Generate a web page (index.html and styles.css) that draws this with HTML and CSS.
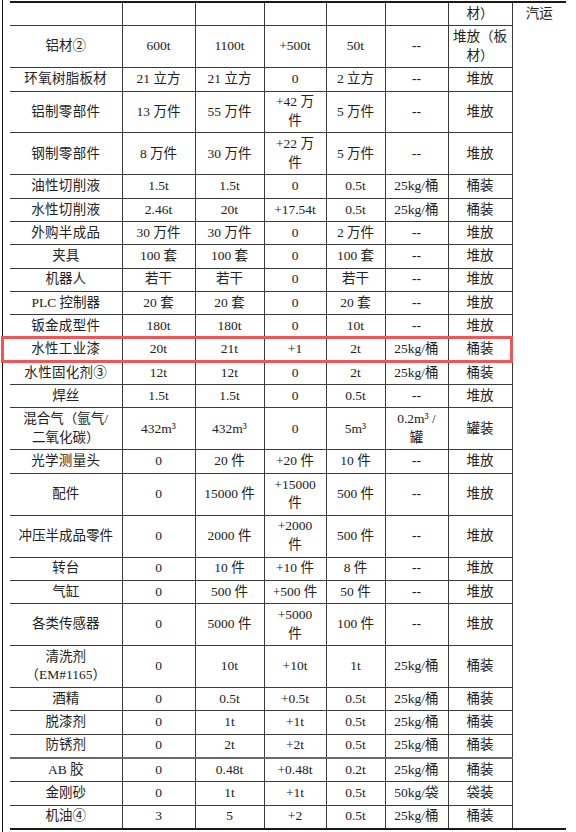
FILE: index.html
```html
<!DOCTYPE html>
<html lang="zh">
<head>
<meta charset="utf-8">
<title>原辅材料表</title>
<link rel="stylesheet" href="styles.css">
</head>
<body>
<div class="page">
<table class="mat">
<colgroup>
<col class="c1"><col class="c2"><col class="c3"><col class="c4"><col class="c5"><col class="c6"><col class="c7"><col class="c8">
</colgroup>
<tbody>
<tr class="first"><td></td><td></td><td></td><td></td><td></td><td></td><td>材）</td><td class="ship" rowspan="29">汽运</td></tr>
<tr><td>铝材②</td><td>600t</td><td>1100t</td><td>+500t</td><td>50t</td><td class="dash">--</td><td>堆放（板<br>材）</td></tr>
<tr><td class="sp">环氧树脂板材</td><td>21 立方</td><td>21 立方</td><td>0</td><td>2 立方</td><td class="dash">--</td><td>堆放</td></tr>
<tr><td class="sp">铝制零部件</td><td>13 万件</td><td>55 万件</td><td>+42 万<br>件</td><td>5 万件</td><td class="dash">--</td><td>堆放</td></tr>
<tr><td class="sp">钢制零部件</td><td>8 万件</td><td>30 万件</td><td>+22 万<br>件</td><td>5 万件</td><td class="dash">--</td><td>堆放</td></tr>
<tr><td class="sp">油性切削液</td><td>1.5t</td><td>1.5t</td><td>0</td><td>0.5t</td><td>25kg/桶</td><td>桶装</td></tr>
<tr><td class="sp">水性切削液</td><td>2.46t</td><td>20t</td><td>+17.54t</td><td>0.5t</td><td>25kg/桶</td><td>桶装</td></tr>
<tr><td class="sp">外购半成品</td><td>30 万件</td><td>30 万件</td><td>0</td><td>2 万件</td><td class="dash">--</td><td>堆放</td></tr>
<tr><td>夹具</td><td>100 套</td><td>100 套</td><td>0</td><td>100 套</td><td class="dash">--</td><td>堆放</td></tr>
<tr><td>机器人</td><td>若干</td><td>若干</td><td>0</td><td>若干</td><td class="dash">--</td><td>堆放</td></tr>
<tr><td>PLC 控制器</td><td>20 套</td><td>20 套</td><td>0</td><td>20 套</td><td class="dash">--</td><td>堆放</td></tr>
<tr><td class="sp">钣金成型件</td><td>180t</td><td>180t</td><td>0</td><td>10t</td><td class="dash">--</td><td>堆放</td></tr>
<tr><td class="sp">水性工业漆</td><td>20t</td><td>21t</td><td>+1</td><td>2t</td><td>25kg/桶</td><td>桶装</td></tr>
<tr><td class="sp">水性固化剂③</td><td>12t</td><td>12t</td><td>0</td><td>2t</td><td>25kg/桶</td><td>桶装</td></tr>
<tr><td>焊丝</td><td>1.5t</td><td>1.5t</td><td>0</td><td>0.5t</td><td class="dash">--</td><td>堆放</td></tr>
<tr><td>混合气（氩气/<br>二氧化碳）</td><td>432m³</td><td>432m³</td><td>0</td><td>5m³</td><td>0.2m³ /<br>罐</td><td>罐装</td></tr>
<tr><td class="sp">光学测量头</td><td>0</td><td>20 件</td><td>+20 件</td><td>10 件</td><td class="dash">--</td><td>堆放</td></tr>
<tr><td>配件</td><td>0</td><td>15000 件</td><td>+15000<br>件</td><td>500 件</td><td class="dash">--</td><td>堆放</td></tr>
<tr><td>冲压半成品零件</td><td>0</td><td>2000 件</td><td>+2000<br>件</td><td>500 件</td><td class="dash">--</td><td>堆放</td></tr>
<tr><td>转台</td><td>0</td><td>10 件</td><td>+10 件</td><td>8 件</td><td class="dash">--</td><td>堆放</td></tr>
<tr><td>气缸</td><td>0</td><td>500 件</td><td>+500 件</td><td>50 件</td><td class="dash">--</td><td>堆放</td></tr>
<tr><td>各类传感器</td><td>0</td><td>5000 件</td><td>+5000<br>件</td><td>100 件</td><td class="dash">--</td><td>堆放</td></tr>
<tr><td>清洗剂<br>（EM#1165）</td><td>0</td><td>10t</td><td>+10t</td><td>1t</td><td>25kg/桶</td><td>桶装</td></tr>
<tr><td>酒精</td><td>0</td><td>0.5t</td><td>+0.5t</td><td>0.5t</td><td>25kg/桶</td><td>桶装</td></tr>
<tr><td>脱漆剂</td><td>0</td><td>1t</td><td>+1t</td><td>0.5t</td><td>25kg/桶</td><td>桶装</td></tr>
<tr><td>防锈剂</td><td>0</td><td>2t</td><td>+2t</td><td>0.5t</td><td>25kg/桶</td><td>桶装</td></tr>
<tr class="ab"><td>AB 胶</td><td>0</td><td>0.48t</td><td>+0.48t</td><td>0.2t</td><td>25kg/桶</td><td>桶装</td></tr>
<tr><td>金刚砂</td><td>0</td><td>1t</td><td>+1t</td><td>0.5t</td><td>50kg/袋</td><td>袋装</td></tr>
<tr class="last"><td>机油④</td><td>3</td><td>5</td><td>+2</td><td>0.5t</td><td>25kg/桶</td><td>桶装</td></tr>
</tbody>
</table>
<div class="highlight"></div>
</div>
</body>
</html>
```

FILE: styles.css
```css
html, body {
  margin: 0;
  padding: 0;
  background: #fff;
  overflow: hidden;
}

.page {
  position: relative;
  margin-left: 2px;
  border-left: 1px solid #111;
  padding-left: 7px;
  padding-top: 1px;
  height: 832px;
  box-sizing: border-box;
}

.mat {
  border-collapse: collapse;
  table-layout: fixed;
  width: 556px;
  font-family: "Liberation Serif", "Noto Sans CJK SC", serif;
  font-size: 13.5px;
  line-height: 18.6px;
  color: #222;
}

.c1 { width: 112px; }
.c2 { width: 73px; }
.c3 { width: 69px; }
.c4 { width: 62px; }
.c5 { width: 59px; }
.c6 { width: 63px; }
.c7 { width: 64px; }
.c8 { width: 54px; }

.mat td {
  border: 1px solid #3a3a3a;
  padding: 1.87px 0;
  text-align: center;
  vertical-align: middle;
  white-space: nowrap;
}

.mat td:first-child {
  border-left: none;
}

.mat .first td {
  border-top: 2px solid #1a1a1a;
}

.mat .last td {
  border-bottom: 2px solid #1a1a1a;
}

.mat .ab td {
  border-top: 2px solid #6a6a6a;
}

.mat td.ship {
  vertical-align: top;
  border-right: none;
  border-top: 2px solid #1a1a1a;
  border-bottom: 2px solid #1a1a1a;
}

.mat td.sp {
  letter-spacing: 0.3px;
}

.mat td.dash {
  font-weight: bold;
}

.highlight {
  position: absolute;
  left: -2px;
  top: 336px;
  width: 512px;
  height: 27px;
  box-sizing: border-box;
  border: 3px solid #f05656;
}
```
